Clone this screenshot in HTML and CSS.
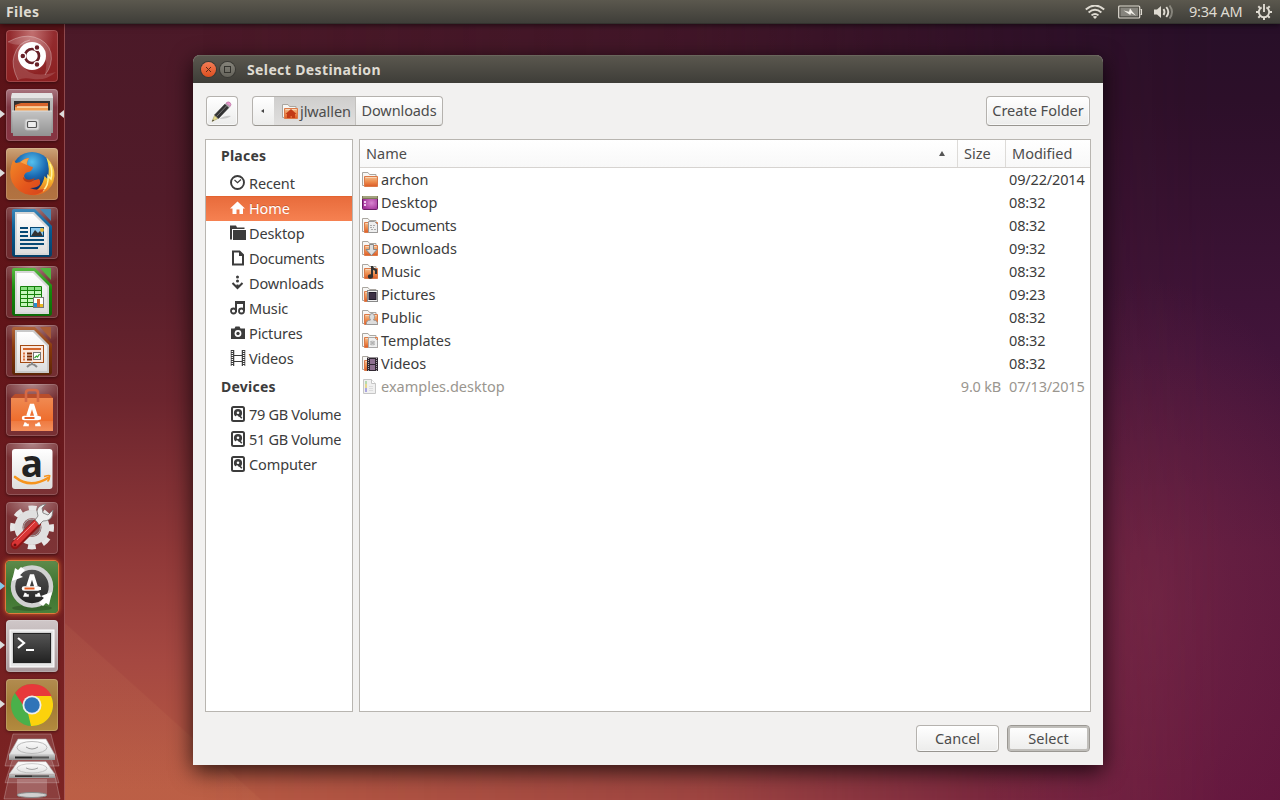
FILE: index.html
```html
<!DOCTYPE html>
<html lang="en">
<head>
<meta charset="utf-8">
<title>Select Destination</title>
<link rel="stylesheet" href="styles.css">
</head>
<body>
<svg class="defs" aria-hidden="true">
  <defs>
    <linearGradient id="orange" x1="0" y1="0" x2="0" y2="1"><stop offset="0" stop-color="#f3c092"/><stop offset=".5" stop-color="#ee8f50"/><stop offset="1" stop-color="#dc5a26"/></linearGradient>
    <linearGradient id="paper" x1="0" y1="0" x2="0" y2="1"><stop offset="0" stop-color="#fff"/><stop offset="1" stop-color="#dedede"/></linearGradient>
    <linearGradient id="metal" x1="0" y1="0" x2="0" y2="1"><stop offset="0" stop-color="#c4c4c4"/><stop offset="1" stop-color="#929292"/></linearGradient>
    <linearGradient id="dark" x1="0" y1="0" x2="0" y2="1"><stop offset="0" stop-color="#555"/><stop offset="1" stop-color="#222"/></linearGradient>
    <linearGradient id="blueDoc" x1="0" y1="0" x2="0" y2="1"><stop offset="0" stop-color="#3b86b8"/><stop offset=".45" stop-color="#075a91"/><stop offset="1" stop-color="#063f68"/></linearGradient>
    <linearGradient id="greenDoc" x1="0" y1="0" x2="0" y2="1"><stop offset="0" stop-color="#58b83f"/><stop offset=".45" stop-color="#17890c"/><stop offset="1" stop-color="#0d6a08"/></linearGradient>
    <linearGradient id="brownDoc" x1="0" y1="0" x2="0" y2="1"><stop offset="0" stop-color="#b0643a"/><stop offset=".45" stop-color="#86370a"/><stop offset="1" stop-color="#5c2607"/></linearGradient>
    <linearGradient id="bag" x1="0" y1="0" x2="0" y2="1"><stop offset="0" stop-color="#f08a52"/><stop offset=".7" stop-color="#ee6c2c"/><stop offset="1" stop-color="#f3834a"/></linearGradient>
    <radialGradient id="globe" cx=".5" cy=".25" r=".7"><stop offset="0" stop-color="#55c0ee"/><stop offset=".5" stop-color="#1c6cb4"/><stop offset="1" stop-color="#12275c"/></radialGradient>
    <linearGradient id="fox" x1="0" y1="0" x2="1" y2="1"><stop offset="0" stop-color="#f28a28"/><stop offset=".6" stop-color="#e4561c"/><stop offset="1" stop-color="#d4441c"/></linearGradient>
    <linearGradient id="flame" x1="0" y1="0" x2="0" y2="1"><stop offset="0" stop-color="#fbe45a"/><stop offset=".6" stop-color="#f5b52c"/><stop offset="1" stop-color="#e4601c"/></linearGradient>
    <radialGradient id="purple" cx=".6" cy=".5" r=".6"><stop offset="0" stop-color="#d884cf"/><stop offset="1" stop-color="#a02f98"/></radialGradient>
    <g id="folder">
      <path d="M.5 13.500V.5h5.500l1.500 2h6.500v2.500" fill="#f7f6f4" stroke="#aaa6a0"/>
      <path d="M.5 13.500h2" stroke="#aaa6a0"/>
      <path d="M2.500 4.500h13v10h-13z" fill="url(#orange)" stroke="#dc7a48"/>
      <path d="M3.500 5.500h11" stroke="#fadcc0" opacity=".8"/>
    </g>
    <g id="drive">
      <rect x="2" y="1" width="12" height="14" rx="1.500" fill="none" stroke="#3c3c3c" stroke-width="2"/>
      <circle cx="8" cy="7" r="4.100" fill="#3c3c3c"/>
      <circle cx="8" cy="6.700" r="1.300" fill="#fff"/>
      <path d="M3.500 12.500l3.500-3.500 4 4z" fill="#fff"/><path d="M8.500 8.500l3.300 3.800" stroke="#3c3c3c" stroke-width="1.600"/>
    </g>
    <g id="hdd">
      <path d="M7 1h38l8 32H-1z" fill="#fff" fill-opacity=".13" stroke="#fff" stroke-opacity=".25"/>
      <path d="M12 6h28l9 16H3z" fill="url(#paper)" stroke="#aaa" stroke-width=".6"/>
      <ellipse cx="26" cy="14.500" rx="15" ry="6" fill="none" stroke="#bbb"/>
      <path d="M20 14q6 4 12 0" fill="none" stroke="#999"/>
      <path d="M3 22h46v5H3z" fill="url(#metal)"/><path d="M9 24.500h17" stroke="#222" stroke-width="2"/><path d="M26 24.500h17" stroke="#555" stroke-width="2"/>
    </g>
    <g id="appmark" fill="none" stroke="#fff">
      <path d="M22 29l3.300-10.500h1.400L30 29" stroke-width="3.600"/>
      <path d="M18 31h14" stroke-width="4.400" stroke-linecap="round"/><path d="M32 31h3" stroke-width="3"/>
      <path d="M19.800 35.500L18.800 38h4M32.200 35.500l1 2.500h-4" stroke-width="2.400"/>
    </g>
  </defs>
</svg>

<header class="panel">
  <span class="panel-title">Files</span>
  <div class="indicators">
    <svg class="wifi" width="20" height="14" viewBox="0 0 20 14"><g fill="none" stroke="#dfdbd2" stroke-width="1.900"><path d="M.8 4.500Q10-3.500 19.200 4.500"/><path d="M3.600 7.500q6.400-5.400 12.800 0"/><path d="M6.500 10.400q3.500-3 7 0"/></g><path d="M7.800 11.800q2.200-1.500 4.400 0L10 14z" fill="#dfdbd2"/></svg>
    <svg class="battery" width="25" height="14" viewBox="0 0 25 14"><rect x=".7" y="1" width="21" height="12" rx="1" fill="none" stroke="#dfdbd2" stroke-width="1.200"/><path d="M22.500 4.500h1v5h-1" fill="none" stroke="#dfdbd2" stroke-width="1.100"/><rect x="2.500" y="2.700" width="17.500" height="8.600" fill="#86847d"/><path d="M5.500 5.500l5.500 1.300 1-3.600 2.500 3.500 3.500 4-5-2.700-.7 2z" fill="#f2efe8"/></svg>
    <svg class="sound" width="20" height="14" viewBox="0 0 20 14"><path d="M0 4.500h3L7 1v12L3 9.500H0z" fill="#dfdbd2"/><g fill="none" stroke="#dfdbd2" stroke-width="1.900"><path d="M9.500 4q2 3 0 6"/><path d="M12.300 2q4 5 0 10"/><path d="M15.500.5q5 6.500 0 13" opacity=".4"/></g></svg>
    <span class="clock">9:34 AM</span>
    <svg class="cog" width="16" height="16" viewBox="0 0 16 16"><g stroke="#dfdbd2" fill="none"><path d="M5.600 3.400a5.200 5.200 0 1 0 4.800 0" stroke-width="1.900"/><path d="M8 0v8" stroke-width="1.900"/><path d="M0 8h2.200M13.800 8H16M8 13.800V16M2.300 2.300l1.600 1.600M12.100 3.900l1.600-1.600M2.300 13.700l1.600-1.600M12.100 12.100l1.600 1.600" stroke-width="2"/></g></svg>
  </div>
</header>

<nav class="launcher">
  <div class="tile tile-dash"><svg viewBox="0 0 52 52"><path d="M2 12Q16 4 28 7q14 4 17 16 2 12-6 22 3-14-1-22-6-10-18-9Q8 16 2 12z" fill="#fff" opacity=".17"/><path d="M12 50Q5 36 8 26q4-14 16-16-10 6-10 16t9 16q10 5 27 0-10 9-23 7-10-2-15 1z" fill="#fff" opacity=".14"/><path d="M2 12Q16 4 28 7q14 4 17 16 2 12-6 22M12 50Q5 36 8 26q4-14 16-16" fill="none" stroke="#fff" stroke-opacity=".3"/><circle cx="26" cy="26" r="14" fill="#fff"/><circle cx="26" cy="26" r="7" fill="none" stroke="#672027" stroke-width="2.700"/><g fill="#672027" stroke="#fff" stroke-width="1.300"><circle cx="16.800" cy="26" r="2.900"/><circle cx="31" cy="17.500" r="2.900"/><circle cx="31" cy="34.500" r="2.900"/></g></svg></div>
  <div class="tile tile-files"><i class="run"></i><i class="focus"></i><svg viewBox="0 0 52 52"><path d="M6 4h40l1 5v35H5V9z" fill="url(#metal)"/><path d="M6 4h40l1 5H5z" fill="#e4e4e4"/><path d="M8 12h36v14H8z" fill="#31302f"/><path d="M9 16l6-2h27v12H9z" fill="#d8642b"/><path d="M9 18h33v8H9z" fill="#f2a052"/><path d="M11 18h31" stroke="#ffe2b5" stroke-width="1.500"/><path d="M6 22h40l-1 25H7z" fill="url(#metal)"/><path d="M6 22h40" stroke="#ddd"/><rect x="19" y="30" width="14" height="11" rx="2" fill="#ddd" stroke="#bbb"/><rect x="21.500" y="32.500" width="9" height="6" rx="1" fill="#eee" stroke="#555" stroke-width="1.200"/></svg></div>
  <div class="tile tile-fox"><i class="run"></i><svg viewBox="0 0 52 52"><circle cx="26" cy="24" r="20" fill="url(#globe)"/><path d="M41 10q8 8 7.500 18-1 12-11 17-9 4-15 1 14-4 16-18l3 3q3-10-1-21z" fill="url(#flame)"/><path d="M44 16q3 7 1 15l-3-3q1 9-5 15" fill="none" stroke="#fff3a0" stroke-width="1.500"/><path d="M7 12q-5 13-1 22 6 12 19 13 9 0 14-6-9 2-15-1 8 0 10-4 1-3-1-5l-8 2q-6 0-7-5 1-4 5-4 3-1 4-5-5-1-6-3 0-3 2-6-5 0-8 4l-5 1z" fill="url(#fox)"/><path d="M17 29q4 5 12 1-2 5-8 4-4-1-4-5z" fill="#b93a14"/><path d="M14 14q4-3 9-4-3 4-2 7z" fill="#f6a348"/></svg></div>
  <div class="tile"><svg viewBox="0 0 52 52"><path d="M8 2h21l17 17v28q0 3-3 3H9q-3 0-3-3V4q0-2 2-2z" fill="url(#blueDoc)"/><path d="M34 2h11v12z" fill="#4688b4"/><path d="M9 5h19l15 15v28H9z" fill="#d7d7d7"/><path d="M11 7h16l14 14v25H11z" fill="url(#paper)"/><path d="M14 21h8M14 25h8M14 29h8M14 33h24M14 37h24M14 41h18" stroke="#064975" stroke-width="2"/><rect x="24.500" y="20.500" width="13" height="9" fill="#8cc9ee" stroke="#064975"/><circle cx="36" cy="23" r="2" fill="#e6b93b"/><path d="M25 29l4-6 3 3 2-2 3 5z" fill="#333"/></svg></div>
  <div class="tile"><svg viewBox="0 0 52 52"><path d="M8 2h21l17 17v28q0 3-3 3H9q-3 0-3-3V4q0-2 2-2z" fill="url(#greenDoc)"/><path d="M34 2h11v12z" fill="#51b640"/><path d="M9 5h19l15 15v28H9z" fill="#d7d7d7"/><path d="M11 7h16l14 14v25H11z" fill="url(#paper)"/><path d="M14.500 20.500h21v20h-21z" fill="#c5f6bc" stroke="#16800b"/><path d="M15 21h20v3H15z" fill="#8be083"/><path d="M14 24.500h22M14 28.500h22M14 32.500h22M14 36.500h22M21.500 20v21M28.500 20v21" stroke="#16800b"/><rect x="27.500" y="31.500" width="10" height="10" fill="#fff" stroke="#777"/><path d="M29.500 41v-4" stroke="#278ed1" stroke-width="3"/><path d="M32.500 41v-8" stroke="#d9682b" stroke-width="3"/><path d="M35.500 41v-3" stroke="#e7b923" stroke-width="3"/></svg></div>
  <div class="tile"><svg viewBox="0 0 52 52"><path d="M8 2h21l17 17v28q0 3-3 3H9q-3 0-3-3V4q0-2 2-2z" fill="url(#brownDoc)"/><path d="M34 2h11v12z" fill="#a95c35"/><path d="M9 5h19l15 15v28H9z" fill="#c9c9c9"/><path d="M11 7h16l14 14v25H11z" fill="url(#paper)"/><rect x="14.500" y="20.500" width="23" height="17" fill="#fbe7dc" stroke="#a34b14"/><path d="M17 24h18" stroke="#d2662c" stroke-width="2"/><path d="M17 28.500h2M17 31.500h2M17 34.500h2" stroke="#dc7340" stroke-width="2"/><path d="M21 28.500h5M21 31.500h5M21 34.500h5" stroke="#7b2e07" stroke-width="2"/><rect x="27.500" y="27.500" width="7" height="7" fill="#fff" stroke="#777"/><path d="M28.500 33l2-2 1 1 2-3" fill="none" stroke="#39a532" stroke-width="1.200"/><path d="M26 37v2m-5 3q3-3 5-3t5 3" fill="none" stroke="#888" stroke-width="2"/></svg></div>
  <div class="tile"><svg viewBox="0 0 52 52"><path d="M5 14l4-4h34l4 4z" fill="#b84d2b"/><path d="M5 14h42v33H5z" fill="url(#bag)"/><path d="M5 37h42v10H5z" fill="#fff" opacity=".1"/><path d="M20 18V9q0-3 3-3h6q3 0 3 3v9" fill="none" stroke="#d56945" stroke-width="2.600"/><use href="#appmark" y="3"/><path d="M18.500 34h10" stroke="#e9652c" stroke-width="2"/></svg></div>
  <div class="tile"><svg viewBox="0 0 52 52"><rect x="6" y="6" width="40.500" height="40" rx="3" fill="url(#paper)"/><text x="26" y="33.500" class="amazon" text-anchor="middle">a</text><path d="M9 34q15 12 33 1" fill="none" stroke="#f6941d" stroke-width="2.600" stroke-linecap="round"/><path d="M38 33.500q7-2 5.500 0 0 3-2 5" fill="none" stroke="#f6941d" stroke-width="1.700"/></svg></div>
  <div class="tile"><svg viewBox="0 0 52 52"><circle cx="26" cy="25.500" r="19.500" fill="none" stroke="#e6e6e6" stroke-width="5" stroke-dasharray="8 7.315" stroke-dashoffset="4"/><circle cx="26" cy="25.500" r="13.500" fill="#c9c9c9" fill-opacity=".2" stroke="#e0e0e0" stroke-width="8"/><circle cx="26" cy="25.500" r="8.500" fill="none" stroke="#aaa"/><path d="M9 43L31 21" stroke="#8f1515" stroke-width="8.500" stroke-linecap="round"/><path d="M9 42L31 20" stroke="#d83434" stroke-width="6" stroke-linecap="round"/><path d="M11 38L29 20" stroke="#f08080" stroke-width="1"/><circle cx="9" cy="43" r="1.500" fill="#6b1010"/><path d="M29 18q2 1 4 5l4-4q7 0 9-5l1-6-5 5-5-2-1-5 4-4q-8 1-9 7l1 5z" fill="#eee" stroke="#777" stroke-width=".8"/></svg></div>
  <div class="tile tile-updater"><i class="run run-urgent"></i><svg viewBox="0 0 52 52"><ellipse cx="26" cy="47" rx="20" ry="3" fill="#000" opacity=".2"/><circle cx="26" cy="25.500" r="19" fill="url(#dark)" stroke="#d1d1d1" stroke-width="4.500"/><path d="M9 7l-3 13 11-4-3-2 5-5-4-3-3 3zM43 44l3-13-11 4 3 2-5 5 4 3 3-3z" fill="#fff"/><use href="#appmark" y="-3.500"/><path d="M18.500 27.500h10" stroke="#e85b20" stroke-width="2"/></svg></div>
  <div class="tile tile-term"><i class="run"></i><svg viewBox="0 0 52 52"><rect x="4" y="10" width="44" height="37" fill="#e7e7e7" stroke="#fff"/><rect x="6.500" y="12.500" width="39" height="31" fill="#bbb"/><rect x="7.500" y="13.500" width="37" height="29" fill="url(#dark)" stroke="#222"/><path d="M12 18l6 5-6 5M20 30h8" fill="none" stroke="#fff" stroke-width="2.200"/></svg></div>
  <div class="tile tile-chrome"><i class="run"></i><svg viewBox="0 0 52 52"><circle cx="26" cy="26" r="21" fill="#4ab04a"/><path d="M26 26L25 47A21 21 0 0 0 45 17H26z" fill="#fcd20c"/><path d="M9 14Q15 5 26 5q14 0 19.500 12H26q-8 1-9 9z" fill="#e8383a"/><path d="M35 26L25 47 22 34z" fill="#fcd20c"/><circle cx="26" cy="26" r="9.500" fill="#eee"/><circle cx="26" cy="26" r="7.700" fill="#2f74b8"/></svg></div>
  <div class="stack"><svg viewBox="0 0 56 68"><g transform="translate(2 45)"><path d="M3 -2h46l5 23H-2z" fill="#fff" fill-opacity=".12" stroke="#fff" stroke-opacity=".25"/><path d="M11 1h30v16H11z" fill="#fff" opacity=".2"/><ellipse cx="26" cy="17" rx="15" ry="2.500" fill="#d0d0d0" stroke="#888"/></g><g transform="translate(2 24) scale(1 .78)"><use href="#hdd"/></g><g transform="translate(2 0)"><use href="#hdd"/></g></svg></div>
</nav>

<main class="dialog">
  <div class="titlebar">
    <span class="wm wm-close"><svg width="7" height="7" viewBox="0 0 7 7"><path d="M1 1l5 5M6 1L1 6" stroke="#5b2a15" stroke-width="1"/></svg></span>
    <span class="wm wm-max"><svg width="7" height="7" viewBox="0 0 7 7"><rect x=".5" y=".5" width="6" height="6" fill="none" stroke="#34332e"/></svg></span>
    <h1>Select Destination</h1>
  </div>
  <div class="toolbar">
    <button class="btn edit"><svg width="22" height="22" viewBox="0 0 22 22"><path d="M8 18q7-4 12-3-3 3-12 3z" fill="#bbb" opacity=".7"/><path d="M1 20.500l2.500-6 3.500 3z" fill="#e6dc8c" stroke="#968d50" stroke-width=".5"/><path d="M1 20.500l1-2 1 1z" fill="#222"/><path d="M3.500 14L14 3l4 3.500L7.500 17.500z" fill="#333" stroke="#222" stroke-width=".5"/><path d="M5.500 15.500L15.500 5" stroke="#777"/><path d="M14 3l1-1 4 3.500-1 1.200z" fill="#aaa"/><path d="M15 2q2-2 4-.5 2 2 .2 4z" fill="#e697cb" stroke="#a96190" stroke-width=".5"/></svg></button>
    <div class="path">
      <button class="seg seg-back"><i></i></button>
      <button class="seg seg-home"><svg width="16" height="16" viewBox="0 0 16 16"><use href="#folder"/><path d="M3.500 10L9 5l5.500 5H13v4h-3v-2H8.500v2H5v-4z" fill="#c23a16"/></svg><span>jlwallen</span></button>
      <button class="seg seg-last">Downloads</button>
    </div>
    <button class="btn create">Create Folder</button>
  </div>
  <div class="panes">
    <aside class="places">
      <h2>Places</h2>
      <ul>
        <li><svg viewBox="0 0 16 16"><circle cx="7.500" cy="7.500" r="6.500" fill="none" stroke="#3c3c3c" stroke-width="1.900"/><path d="M4.500 5l3 2.700L11 4.500" fill="none" stroke="#3c3c3c" stroke-width="1.200"/></svg>Recent</li>
        <li class="selected"><svg viewBox="0 0 16 16"><path d="M7.500 1.500L15 8.500h-2V14H9.500V9.500h-3V14H2.500V8.500H0z" fill="#fff"/></svg>Home</li>
        <li><svg viewBox="0 0 16 16"><path d="M0 .5h6l1 2h7.500V4H2v10.500H0z" fill="#3c3c3c"/><path d="M3 5h13v10H3z" fill="#3c3c3c"/></svg>Desktop</li>
        <li class="tight"><svg viewBox="0 0 16 16"><path d="M3 1.500h6.500L13 5v9.500H3z" fill="none" stroke="#3c3c3c" stroke-width="2"/><path d="M9 1v5h5z" fill="#3c3c3c"/></svg>Documents</li>
        <li><svg viewBox="0 0 16 16"><circle cx="7.500" cy="2" r="1.500" fill="#3c3c3c"/><circle cx="7.500" cy="6" r="1.500" fill="#3c3c3c"/><path d="M2.500 8l5 5 5-5M7.500 9.500v3" fill="none" stroke="#3c3c3c" stroke-width="2"/></svg>Downloads</li>
        <li><svg viewBox="0 0 16 16"><path d="M6 12V2h8v9" fill="none" stroke="#3c3c3c" stroke-width="2"/><path d="M5 1h10v3H5z" fill="#3c3c3c"/><g fill="none" stroke="#3c3c3c" stroke-width="1.800"><circle cx="3.500" cy="11" r="2.500"/><circle cx="11.500" cy="11" r="2.500"/></g></svg>Music</li>
        <li><svg viewBox="0 0 16 16"><path d="M1 3.500h3.500l1-2h4l1 2H15V14H1z" fill="#3c3c3c"/><circle cx="8" cy="8.500" r="3.400" fill="#fff"/><circle cx="8" cy="8.500" r="1.700" fill="#3c3c3c"/></svg>Pictures</li>
        <li><svg viewBox="0 0 16 16"><path d="M2.500 0v16M13.500 0v16" stroke="#3c3c3c" stroke-width="3.500"/><path d="M2.300 1v15M13.700 1v15" stroke="#fff" stroke-width="1.500" stroke-dasharray="1 1"/><path d="M4 5.500h8M4 11.500h8" stroke="#3c3c3c" stroke-width="1"/></svg>Videos</li>
      </ul>
      <h2>Devices</h2>
      <ul>
        <li class="vol"><svg viewBox="0 0 16 16"><use href="#drive"/></svg>79 GB Volume</li>
        <li class="vol"><svg viewBox="0 0 16 16"><use href="#drive"/></svg>51 GB Volume</li>
        <li><svg viewBox="0 0 16 16"><use href="#drive"/></svg>Computer</li>
      </ul>
    </aside>
    <section class="files">
      <div class="row head"><span class="name">Name<i class="sort"></i></span><span class="size">Size</span><span class="date">Modified</span></div>
      <div class="row"><span class="name"><svg viewBox="0 0 16 16"><use href="#folder"/></svg>archon</span><span class="size"></span><span class="date">09/22/2014</span></div>
      <div class="row"><span class="name"><svg viewBox="0 0 16 16"><rect x=".5" y="1.500" width="15" height="13" rx="1" fill="url(#purple)" stroke="#6a1d66"/><path d="M0 1h16v3H0z" fill="#7d7b58"/><path d="M1 2h14" stroke="#c9c8a5"/><path d="M2 6h2v2H2zM2 9h2v2H2z" fill="#f0c9ee"/></svg>Desktop</span><span class="size"></span><span class="date">08:32</span></div>
      <div class="row tight"><span class="name"><svg viewBox="0 0 16 16"><use href="#folder"/><path d="M6.500 3.500h6l3 3v8h-9z" fill="#eee" stroke="#999"/><path d="M8 7.500h5M8 9.500h4M9 11.500h5" stroke="#aaa" stroke-dasharray="2 1"/></svg>Documents</span><span class="size"></span><span class="date">08:32</span></div>
      <div class="row"><span class="name"><svg viewBox="0 0 16 16"><use href="#folder"/><path d="M7.500 3.500h4v5h3.500l-5.500 6-5.500-6h3.500z" fill="#ddd" stroke="#888"/></svg>Downloads</span><span class="size"></span><span class="date">09:32</span></div>
      <div class="row"><span class="name"><svg viewBox="0 0 16 16"><use href="#folder"/><path d="M10 2v10M10 3q1 2 4 3v4" fill="none" stroke="#333" stroke-width="2"/><ellipse cx="8.500" cy="12.500" rx="2.600" ry="2.300" fill="#333"/></svg>Music</span><span class="size"></span><span class="date">08:32</span></div>
      <div class="row"><span class="name"><svg viewBox="0 0 16 16"><use href="#folder"/><rect x="5.500" y="3.500" width="10" height="11" fill="#eee" stroke="#888"/><rect x="7" y="5.500" width="7" height="7" fill="#3c3045" stroke="#211b2a"/></svg>Pictures</span><span class="size"></span><span class="date">09:23</span></div>
      <div class="row"><span class="name"><svg viewBox="0 0 16 16"><use href="#folder"/><path d="M4.500 14.500q-1-4 4-4.500-1-1-1-3.500 0-3 2.500-3t2.500 3q0 2.500-1 3.500 4.500.5 4 4.500z" fill="#ddd" stroke="#999"/></svg>Public</span><span class="size"></span><span class="date">08:32</span></div>
      <div class="row"><span class="name"><svg viewBox="0 0 16 16"><use href="#folder"/><path d="M6.500 4.500h6l3 3v7h-9z" fill="#eee" stroke="#aaa"/><circle cx="10.500" cy="10" r="2.600" fill="#ccc"/><path d="M8.500 12l4-4M8.500 8l4 4" stroke="#aaa"/></svg>Templates</span><span class="size"></span><span class="date">08:32</span></div>
      <div class="row"><span class="name"><svg viewBox="0 0 16 16"><use href="#folder"/><path d="M5 1.500h11v13.500H5z" fill="#302731"/><path d="M8 3h5v5H8zM8 9h5v5H8z" fill="#8e7190"/><path d="M6.500 2v13M14.500 2v13" stroke="#aaa" stroke-dasharray="1 1"/></svg>Videos</span><span class="size"></span><span class="date">08:32</span></div>
      <div class="row dim"><span class="name"><svg viewBox="0 0 16 16"><path d="M1.500.5h8l4 4v10h-12z" fill="#f0f0f0" stroke="#c6c6c6"/><path d="M9.500.5v4h4" fill="#fff" stroke="#c6c6c6"/><path d="M4 2v3" stroke="#b7d9b1" stroke-width="2"/><path d="M4 5v4" stroke="#e6d78f" stroke-width="2"/><path d="M4 9v4" stroke="#aaa6df" stroke-width="2"/><path d="M7 7.500h4M7 9.500h4M7 11.500h4" stroke="#ddd"/></svg>examples.desktop</span><span class="size">9.0 kB</span><span class="date">07/13/2015</span></div>
    </section>
  </div>
  <footer class="actions">
    <button class="btn">Cancel</button>
    <button class="btn default">Select</button>
  </footer>
</main>
</body>
</html>
```
FILE: styles.css
```css
* { box-sizing: border-box; }
body {
  margin: 0;
  width: 1280px;
  height: 800px;
  overflow: hidden;
  position: relative;
  display: flex;
  flex-direction: column;
  font-family: "Noto Sans", "Open Sans", sans-serif;
  font-size: 14.5px;
  color: #3c3c3c;
  background:
    linear-gradient(42deg, rgba(255, 190, 120, .05) 12%, transparent 12.1%),
    linear-gradient(#4a1928 0, #521b29 200px, #5c1f2b 300px, #6c252e 400px, #8f3838 550px, #a54841 660px, #b85a43 790px);
}
body::before {
  content: "";
  position: absolute;
  inset: 0;
  background:
    radial-gradient(ellipse 200px 320px at 1150px 600px, rgba(125, 45, 75, .5), transparent),
    linear-gradient(#260f28 0, #2c0f29 100px, #42143a 350px, #5a183d 550px, #62153d 800px);
  -webkit-mask-image: linear-gradient(to right, transparent 200px, rgba(0, 0, 0, .3) 700px, rgba(0, 0, 0, .85) 1080px, #000 1220px);
  mask-image: linear-gradient(to right, transparent 200px, rgba(0, 0, 0, .3) 700px, rgba(0, 0, 0, .85) 1080px, #000 1220px);
}
h1, h2, ul { margin: 0; padding: 0; font-size: inherit; list-style: none; }
button { font: inherit; color: inherit; margin: 0; padding: 0; border: 0; background: none; white-space: nowrap; }
svg { display: block; flex: none; }
.defs { position: absolute; width: 0; height: 0; }

/* Top panel */
.panel {
  position: relative;
  z-index: 2;
  height: 24px;
  flex: none;
  display: flex;
  align-items: center;
  justify-content: space-between;
  padding: 0 8px 0 6px;
  background: linear-gradient(#5b584e, #3f3e39);
  border-bottom: 1px solid #33322e;
  box-shadow: 0 1px 6px rgba(0, 0, 0, .6);
  color: #dfdbd2;
}
.panel-title { font-weight: 700; font-size: 14px; letter-spacing: .4px; }
.indicators { display: flex; align-items: center; }
.battery { margin-left: 13px; }
.sound { margin-left: 11px; }
.clock { margin-left: 15px; width: 54px; font-size: 14.5px; line-height: 20px; padding-bottom: 1px; letter-spacing: -.2px; white-space: nowrap; }
.cog { margin-left: 13px; }

/* Launcher */
.launcher {
  position: relative;
  width: 65px;
  height: 776px;
  padding: 6px 0 0 6px;
  display: flex;
  flex-direction: column;
  gap: 7px;
  background: linear-gradient(#5a1318, #611519 40%, #6d1b1f 62%, #7c2423);
  border-right: 1px solid rgba(255, 190, 190, .32);
}
.tile {
  position: relative;
  width: 52px;
  height: 52px;
  flex: none;
  border-radius: 4px;
  background: radial-gradient(ellipse 34px 20px at 50% 0, rgba(255, 255, 255, .42), transparent), rgba(255, 255, 255, .1);
  box-shadow: inset 0 0 0 1px rgba(255, 255, 255, .17), 0 1px 3px rgba(0, 0, 0, .4);
}
.tile svg { width: 52px; height: 52px; overflow: visible; }
.tile-dash { background: radial-gradient(ellipse at 50% 0, #c47373, transparent 60%), linear-gradient(#942d30, #8c2021); }
.tile-files { background: linear-gradient(#a97680, #7e3541 35%, #873442); }
.tile-fox { background: linear-gradient(#cda478, #ac6c3e 40%, #b27341); }
.tile-updater { background: linear-gradient(#5d8a4a, #3c732f 50%, #4a803a); box-shadow: 0 0 0 1px #e07a3c, 0 0 5px 1px #d9682c; }
.tile-term { background: linear-gradient(#cfc7c8, #a8999b); }
.tile-chrome { background: linear-gradient(#b28c50, #a37a35 50%, #b38b3e); }
.amazon { font: 700 37px "Open Sans", sans-serif; fill: #222; }
.run, .focus {
  position: absolute;
  top: 21px;
  border: solid transparent;
  border-width: 4px 0 4px 5px;
}
.run { left: -6px; border-left-color: #ddd; }
.run-urgent { border-left-color: #84c8ea; }
.focus { right: -6px; border-width: 4px 5px 4px 0; border-right-color: #ddd; }
.stack { width: 56px; height: 66px; margin: -5px 0 0 -2px; }
.stack svg { width: 56px; height: 68px; overflow: visible; }

/* Dialog window */
.dialog {
  position: absolute;
  left: 193px;
  top: 55px;
  width: 910px;
  height: 710px;
  display: flex;
  flex-direction: column;
  background: #f2f1f0;
  border-radius: 7px 7px 0 0;
  box-shadow: 0 6px 22px rgba(0, 0, 0, .75);
}
.titlebar {
  height: 28px;
  display: flex;
  align-items: center;
  padding: 0 8px;
  border-radius: 7px 7px 0 0;
  background: linear-gradient(#5b584f, #3e3d38);
  box-shadow: inset 0 1px #69665c;
  color: #dfdbd2;
}
.wm {
  width: 15px;
  height: 15px;
  margin-right: 4px;
  border-radius: 50%;
  display: flex;
  align-items: center;
  justify-content: center;
  background: linear-gradient(#f37c55, #dd4f20);
  box-shadow: 0 0 0 1px #3a3934;
}
.wm-max { background: linear-gradient(#85837a, #65635b); }
.titlebar h1 { margin-left: 8px; font-weight: 700; font-size: 14px; letter-spacing: .38px; line-height: 28px; padding-top: 1px; white-space: nowrap; }
.toolbar { display: flex; padding: 13px 13px 0; height: 56px; }
.btn {
  height: 30px;
  line-height: 26px;
  padding-bottom: 2px;
  border: 1px solid #b5b2ae;
  border-bottom-color: #989590;
  border-radius: 4px;
  background: linear-gradient(#fff, #ececeb);
  box-shadow: inset 0 0 0 1px rgba(255, 255, 255, .6);
  color: #4c4c4c;
}
.edit { width: 32px; padding: 1px 0 0 4px; }
.create { width: 104px; margin-left: auto; letter-spacing: 0; }
.path {
  display: flex;
  height: 30px;
  margin-left: 14px;
  width: 191px;
  border: 1px solid #b5b2ae;
  border-bottom-color: #989590;
  border-radius: 4px;
  overflow: hidden;
  background: linear-gradient(#fff, #ececeb);
  color: #4c4c4c;
}
.seg { display: flex; align-items: center; justify-content: center; }
.seg-back { width: 21px; padding-right: 2px; }
.seg-back i { border: solid transparent; border-width: 2.5px 3px 2.5px 0; border-right-color: #444; }
.seg-home { width: 82px; justify-content: flex-start; background: linear-gradient(#cfcecd, #e0dfde); border-right: 1px solid #c3c1be; padding-left: 8px; letter-spacing: -.1px; }
.seg-home svg { margin-top: 2px; }
.seg-home span { padding-left: 2px; }
.seg-last { flex: 1; padding-bottom: 2px; letter-spacing: -.1px; }

.panes { display: flex; gap: 6px; height: 573px; padding: 0 12px; }
.places { width: 148px; background: #fff; border: 1px solid #b8b5b0; }
.places h2 { height: 31px; line-height: 31px; padding-left: 15px; font-weight: 700; font-size: 14px; letter-spacing: .25px; }
.places li { height: 25px; display: flex; align-items: center; gap: 3px; padding: 0 0 2px 24px; letter-spacing: -.12px; white-space: nowrap; }
.places svg { width: 16px; height: 16px; }
.places .vol, .places .tight { letter-spacing: -.3px; }
.places .selected { color: #fff; background: linear-gradient(#e4632f 1px, #e86c3c 1px, #f68151); text-shadow: 0 -1px rgba(120, 40, 10, .3); }
.files { flex: 1; background: #fff; border: 1px solid #b8b5b0; }
.row { display: grid; grid-template-columns: 597px 48px 1fr; height: 23px; line-height: 23px; }
.row span { white-space: nowrap; }
.row .name { display: flex; align-items: center; gap: 3px; padding-left: 2px; }
.row.tight .name { letter-spacing: -.3px; }
.row svg { width: 16px; height: 16px; }
.row .size { text-align: right; padding-right: 4px; letter-spacing: -.2px; }
.row .date { padding-left: 4px; letter-spacing: -.15px; }
.row.head { height: 28px; line-height: 27px; border-bottom: 1px solid #d6d3d0; background: linear-gradient(#fff, #f8f8f8); color: #4c4c4c; }
.row.head .name { padding: 0 12px 0 6px; justify-content: space-between; }
.row.head .size { text-align: left; border-left: 1px solid #dddbd8; padding-left: 6px; letter-spacing: 0; }
.row.head .date { border-left: 1px solid #dddbd8; padding-left: 6px; letter-spacing: 0; }
.sort { border: solid transparent; border-width: 0 3px 5px; border-bottom-color: #555; }
.dim { color: #9a968f; }
.actions { display: flex; justify-content: flex-end; gap: 8px; padding: 13px 13px 0; }
.actions .btn { width: 83px; height: 27px; line-height: 25px; padding-bottom: 0; }
.actions .default { border-color: #9b9893; box-shadow: inset 0 0 0 2px #c0beba; }
```
